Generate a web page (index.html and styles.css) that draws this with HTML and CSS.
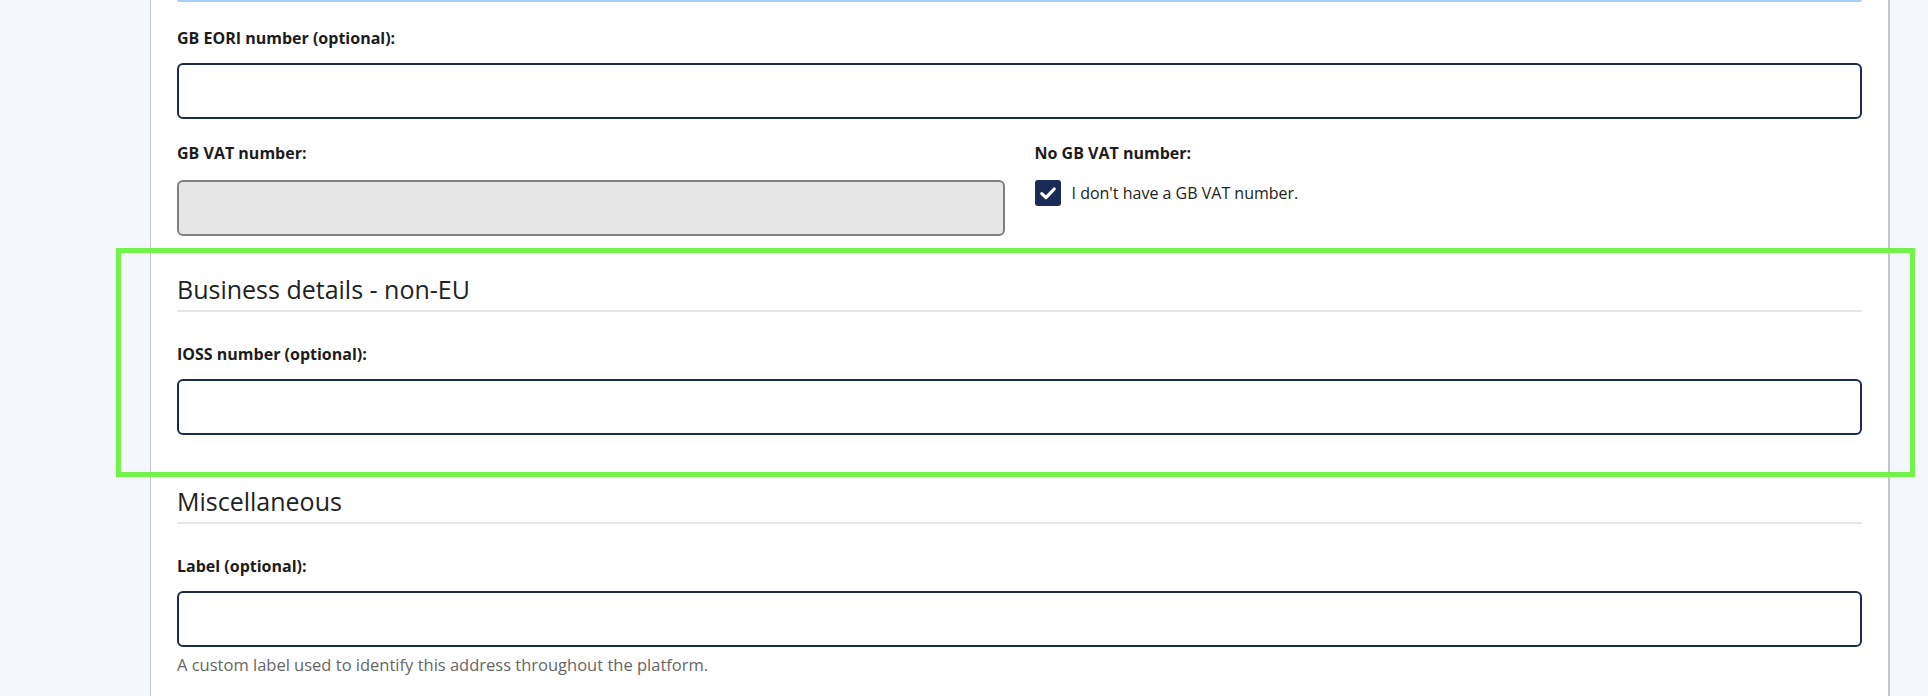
FILE: index.html
```html
<!DOCTYPE html>
<html lang="en">
<head>
    <meta charset="UTF-8">
    <meta name="viewport" content="width=device-width, initial-scale=1.0">
    <title>Address details</title>
    <link rel="stylesheet" href="styles.css">
</head>
<body>

<div class="card">
    <div class="focus-tail"></div>

    <div class="field">
        <label for="eori">GB EORI number (optional):</label>
        <input type="text" id="eori" class="text-input" />
    </div>

    <div class="row">
        <div class="field">
            <label for="vat">GB VAT number:</label>
            <input type="text" id="vat" class="text-input" disabled />
        </div>
        <div class="field">
            <label>No GB VAT number:</label>
            <div class="check-row">
                <span class="checkbox">
                    <svg width="26" height="26" viewBox="0 0 26 26">
                        <path d="M6.8 13.6 L11 17.6 L19.2 9" fill="none" stroke="#fff" stroke-width="3.2" stroke-linecap="round" stroke-linejoin="round"/>
                    </svg>
                </span>
                <span class="check-text">I don't have a GB VAT number.</span>
            </div>
        </div>
    </div>

    <section class="group group-first">
        <h2>Business details - non-EU</h2>
        <div class="field">
            <label for="ioss">IOSS number (optional):</label>
            <input type="text" id="ioss" class="text-input" />
        </div>
    </section>

    <section class="group">
        <h2>Miscellaneous</h2>
        <div class="field">
            <label for="label">Label (optional):</label>
            <input type="text" id="label" class="text-input" />
            <p class="help">A custom label used to identify this address throughout the platform.</p>
        </div>
    </section>
</div>

<div class="highlight"></div>

</body>
</html>
```

FILE: styles.css
```css
html, body {
    height: 100%;
    overflow: hidden;
}
body {
    font-family: "Open Sans", "Noto Sans", sans-serif;
    background-color: #f4f8fc;
    color: #222;
    margin: 0;
}
.card {
    background-color: #ffffff;
    margin: 0 38px 0 150px;
    padding: 0 26px;
    border-left: 1px solid #c6c6c6;
    border-right: 2px solid #c6c6c6;
    min-height: 720px;
    box-sizing: border-box;
}
.focus-tail {
    height: 2px;
    background-color: #a9d1f7;
    border-radius: 0 0 6px 6px;
}
.field {
    margin-top: 24px;
}
.field label {
    display: block;
    font-weight: bold;
    font-size: 16px;
    line-height: 24px;
    margin-bottom: 13px;
    color: #1c1c1c;
}
.text-input {
    display: block;
    width: 100%;
    height: 56px;
    box-sizing: border-box;
    border: 2px solid #1b2a4f;
    border-radius: 6px;
    background-color: #fff;
    font-size: 16px;
    padding: 0 12px;
    margin: 0;
}
.text-input:disabled {
    background-color: #e6e6e6;
    border-color: #808080;
}
.row {
    display: grid;
    grid-template-columns: 1fr 1fr;
    column-gap: 30px;
}
.row .field label {
    margin-top: -2px;
    margin-bottom: 15px;
}
.check-row {
    display: flex;
    align-items: center;
    gap: 11px;
}
.checkbox {
    width: 26px;
    height: 26px;
    border-radius: 3px;
    background-color: #1b2b55;
    display: flex;
}
.check-text {
    font-size: 16px;
    line-height: 24px;
}
.group {
    margin-top: 50px;
}
.group-first {
    margin-top: 37px;
}
.group h2 {
    font-size: 25px;
    font-weight: normal;
    line-height: 32px;
    margin: 0 0 30px;
    padding-bottom: 5px;
    border-bottom: 2px solid #e6e6e6;
}
.help {
    margin: 6px 0 0;
    font-size: 16.5px;
    line-height: 24px;
    color: #666;
}
.highlight {
    position: absolute;
    left: 116px;
    top: 248px;
    width: 1799px;
    height: 229px;
    box-sizing: border-box;
    border: 5px solid #72f24a;
    pointer-events: none;
}
```
